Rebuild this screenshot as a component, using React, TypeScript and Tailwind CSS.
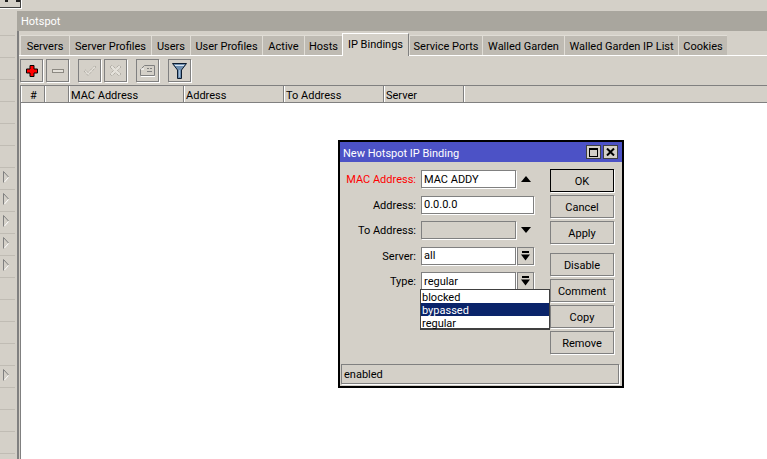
import React from 'react';

const TABS = [
  { label: 'Servers', w: 'w-[49px]' },
  { label: 'Server Profiles', w: 'w-[82px]' },
  { label: 'Users', w: 'w-[39px]' },
  { label: 'User Profiles', w: 'w-[72px]' },
  { label: 'Active', w: 'w-[42px]' },
  { label: 'Hosts', w: 'w-[38px]' },
  { label: 'IP Bindings', w: 'w-[67px]', active: true },
  { label: 'Service Ports', w: 'w-[73px]' },
  { label: 'Walled Garden', w: 'w-[82px]' },
  { label: 'Walled Garden IP List', w: 'w-[114px]' },
  { label: 'Cookies', w: 'w-[49px]' },
];

const COLUMNS = [
  { label: '#', w: 'w-[24px] justify-center' },
  { label: '', w: 'w-[24px]' },
  { label: 'MAC Address', w: 'w-[115px]' },
  { label: 'Address', w: 'w-[100px]' },
  { label: 'To Address', w: 'w-[100px]' },
  { label: 'Server', w: 'w-[80px]' },
];

// rows of the collapsed side menu, the ones with a submenu get an arrow
const SIDE_ROWS = [0, 0, 0, 0, 0, 0, 0, 1, 1, 1, 1, 1, 0, 0, 0, 0, 1, 0, 0, 0];

const SideArrow = () => (
  <svg width="6" height="12" viewBox="0 0 6 12">
    <path d="M0.5 0.5 L5.5 6" stroke="#808080" fill="none" />
    <path d="M0.5 0.5 V11.5" stroke="#808080" fill="none" />
    <path d="M1.5 11 L5.5 6.5" stroke="#ffffff" fill="none" />
  </svg>
);

const ToolButton = ({ children, className = '' }: { children: React.ReactNode; className?: string }) => (
  <div className={`w-[23px] h-[23px] flex items-center justify-center border border-[#808080] shadow-[1px_1px_0_#ffffff] ${className}`}>
    {children}
  </div>
);

const Toolbar = () => (
  <div className="h-[29px] flex items-start pl-[1px] pt-[3px] shrink-0">
    <ToolButton>
      <svg width="12" height="12" viewBox="0 0 12 12">
        <path d="M4 0.5 H8 V4 H11.5 V8 H8 V11.5 H4 V8 H0.5 V4 H4 Z" fill="#ff0000" stroke="#000000" />
      </svg>
    </ToolButton>
    <ToolButton className="ml-[3px]">
      <svg width="12" height="4" viewBox="0 0 12 4">
        <rect x="0.5" y="0.5" width="11" height="3" fill="#e4e1da" stroke="#8c8982" />
      </svg>
    </ToolButton>
    <ToolButton className="ml-[9px]">
      <svg width="14" height="12" viewBox="0 0 14 12">
        <path d="M1 6 L5 10.5 L13 2 L11.5 1 L5 7.5 L2.5 5 Z" fill="#e4e1da" stroke="#a09c94" strokeDasharray="1 1" />
      </svg>
    </ToolButton>
    <ToolButton className="ml-[3px]">
      <svg width="13" height="13" viewBox="0 0 13 13">
        <path d="M1 3 L3 1 L6.5 4.5 L10 1 L12 3 L8.5 6.5 L12 10 L10 12 L6.5 8.5 L3 12 L1 10 L4.5 6.5 Z" fill="#e4e1da" stroke="#a09c94" strokeDasharray="1 1" />
      </svg>
    </ToolButton>
    <ToolButton className="ml-[9px]">
      <svg width="15" height="13" viewBox="0 0 15 13">
        <path d="M0.5 5.5 L4.5 1.5 H14.5 V11.5 H0.5 Z" fill="#d4d0c8" stroke="#808080" />
        <path d="M1 12.5 H15 M4 5 H1" stroke="#ffffff" />
        <path d="M7 4.5 H9 M10 4.5 H12 M7 7.5 H12" stroke="#808080" />
      </svg>
    </ToolButton>
    <ToolButton className="ml-[9px]">
      <svg width="15" height="16" viewBox="0 0 15 16">
        <path d="M0.5 0.5 H14.5 L9.5 7 V15.5 H5.5 V7 Z" fill="#6f8fb0" stroke="#0c1c30" />
        <path d="M3 2.5 H12" stroke="#d8e4f0" />
        <path d="M7.5 7 V14" stroke="#a8c0d8" />
      </svg>
    </ToolButton>
  </div>
);

const Field = ({
  label,
  value,
  w = 'w-[95px]',
  red = false,
  disabled = false,
  children,
}: {
  label: string;
  value?: string;
  w?: string;
  red?: boolean;
  disabled?: boolean;
  children?: React.ReactNode;
}) => (
  <div className="flex items-center h-[18px]">
    <div className={`w-[75px] pr-[3px] pt-[3px] text-right shrink-0 ${red ? 'text-[#ff0000]' : ''}`}>{label}:</div>
    <div
      className={`ml-[2px] h-[18px] ${w} border border-[#808080] shadow-[1px_1px_0_#ffffff] flex items-center pl-[2px] pt-[2px] ${
        disabled ? 'bg-[#d4d0c8]' : 'bg-white'
      }`}
    >
      {value}
    </div>
    {children}
  </div>
);

const DropButton = () => (
  <div className="ml-[1px] w-[17px] h-[18px] border border-[#808080] shadow-[1px_1px_0_#ffffff] flex items-center justify-center">
    <svg width="9" height="10" viewBox="0 0 9 10">
      <path d="M1 1 H8" stroke="#000000" strokeWidth="2" />
      <path d="M0 3.5 H9 L4.5 9.5 Z" fill="#000000" />
    </svg>
  </div>
);

const DialogButton = ({ label, primary = false, className = '' }: { label: string; primary?: boolean; className?: string }) => (
  <div
    className={`w-[64px] h-[23px] flex items-center justify-center pt-[3px] shadow-[1px_1px_0_#ffffff] border ${
      primary ? 'border-black' : 'border-[#808080]'
    } ${className}`}
  >
    {label}
  </div>
);

const Dialog = () => (
  <div className="absolute left-[338px] top-[140px] w-[286px] h-[248px] bg-[#d4d0c8] border-2 border-black flex flex-col">
    <div className="h-[20px] bg-[#4c52c6] text-white flex items-center pl-[3px] pr-[4px] shrink-0">
      <span className="pt-[5px]">New Hotspot IP Binding</span>
      <div className="ml-auto flex gap-[2px]">
        <div className="w-[15px] h-[14px] bg-[#d4d0c8] border border-[#404040] flex items-center justify-center">
          <div className="w-[9px] h-[9px] border border-black border-t-2" />
        </div>
        <div className="w-[15px] h-[14px] bg-[#d4d0c8] border border-[#404040] flex items-center justify-center">
          <svg width="9" height="8" viewBox="0 0 9 8">
            <path d="M1 0.5 L8 7.5 M8 0.5 L1 7.5" stroke="#000000" strokeWidth="2" fill="none" />
          </svg>
        </div>
      </div>
    </div>
    <div className="flex flex-1 pt-[8px] pl-[4px] relative">
      <div className="flex flex-col gap-[7.5px] w-[204px] mr-[2px]">
        <Field label="MAC Address" value="MAC ADDY" red>
          <svg className="ml-[5px]" width="10" height="6" viewBox="0 0 10 6">
            <path d="M0 6 L5 0 L10 6 Z" fill="#000000" />
          </svg>
        </Field>
        <Field label="Address" value="0.0.0.0" w="w-[113px]" />
        <Field label="To Address" w="w-[95px]" disabled>
          <svg className="ml-[5px]" width="10" height="6" viewBox="0 0 10 6">
            <path d="M0 0 L5 6 L10 0 Z" fill="#000000" />
          </svg>
        </Field>
        <Field label="Server" value="all">
          <DropButton />
        </Field>
        <Field label="Type" value="regular">
          <DropButton />
        </Field>
      </div>
      <div className="flex flex-col -mt-[1px]">
        <DialogButton label="OK" primary />
        <DialogButton label="Cancel" className="mt-[3px]" />
        <DialogButton label="Apply" className="mt-[3px]" />
        <DialogButton label="Disable" className="mt-[9px]" />
        <DialogButton label="Comment" className="mt-[3px]" />
        <DialogButton label="Copy" className="mt-[3px]" />
        <DialogButton label="Remove" className="mt-[3px]" />
      </div>
      {/* open dropdown of the Type field */}
      <div className="absolute left-[80px] top-[127px] w-[130px] h-[41px] bg-white border border-[#404040] border-b-2 z-10">
        <div className="h-[13px] pl-[1px] pt-[1px] leading-[13px] overflow-hidden">blocked</div>
        <div className="h-[13px] pl-[1px] pt-[1px] leading-[13px] overflow-hidden bg-[#0a246a] text-white">bypassed</div>
        <div className="h-[13px] pl-[1px] pt-[1px] leading-[13px] overflow-hidden">regular</div>
      </div>
    </div>
    <div className="ml-[1px] mr-[3px] mb-[2px] h-[20px] border border-[#808080] shadow-[1px_1px_0_#ffffff] flex items-center pl-[2px] pt-[3px] shrink-0">
      enabled
    </div>
  </div>
);

export default function App() {
  return (
    <div
      className="relative w-[767px] h-[459px] overflow-hidden bg-[#d4d0c8] text-black text-[11px] flex"
      style={{ fontFamily: 'Roboto, Tahoma, sans-serif' }}
    >
      {/* side menu, mostly off screen */}
      <div className="w-[17px] shrink-0 flex flex-col pt-[14px]">
        {SIDE_ROWS.map((arrow, i) => (
          <div key={i} className="h-[22px] shrink-0 mr-[2px] border-b border-[#c0bcb4] flex items-center pl-[3px] pb-[3px]">
            {arrow ? <SideArrow /> : null}
          </div>
        ))}
      </div>

      <div className="flex-1 flex flex-col pt-[11px] min-w-0">
        <div className="h-[20px] bg-[#a9a69e] text-white flex items-center pl-[4px] pt-[2px] shrink-0">Hotspot</div>

        <div className="flex-1 flex flex-col border-l-2 border-[#808080] min-h-0">
          <div className="h-[25px] flex items-end pl-[1px] border-b border-white shrink-0">
            {TABS.map((t) =>
              t.active ? (
                <div key={t.label} className={`${t.w} h-[23px] -mb-[1px] bg-[#d4d0c8] border border-white border-b-0 border-r-[#808080] flex items-center justify-center relative`}>
                  {t.label}
                </div>
              ) : (
                <div key={t.label} className={`${t.w} h-[20px] bg-[#bfbbb3] border-t border-l border-[#e0ddd6] flex items-center justify-center pt-[3px]`}>
                  {t.label}
                </div>
              ),
            )}
          </div>

          <Toolbar />

          <div className="ml-[1px] flex-1 flex flex-col border-l border-[#808080] bg-white">
            <div className="h-[18px] flex bg-[#d4d0c8] border-t border-b border-[#808080] shrink-0">
              {COLUMNS.map((c, i) => (
                <div key={i} className={`${c.w} flex items-center pl-[2px] pt-[4px] border-r border-[#808080] shadow-[inset_1px_0_0_#ffffff]`}>
                  {c.label}
                </div>
              ))}
              <div className="flex-1 shadow-[inset_1px_0_0_#ffffff]" />
            </div>
          </div>
        </div>
      </div>

      {/* corner of a window above */}
      <div className="absolute left-0 top-0 w-[22px] h-[9px] border-r border-b border-white shadow-[inset_-1px_-1px_0_#404040]">
        <div className="flex gap-[8px] pl-[5px]">
          <div className="w-[3px] h-[2px] bg-[#202020]" />
          <div className="w-[4px] h-[2px] bg-[#202020]" />
        </div>
      </div>

      <Dialog />
    </div>
  );
}
